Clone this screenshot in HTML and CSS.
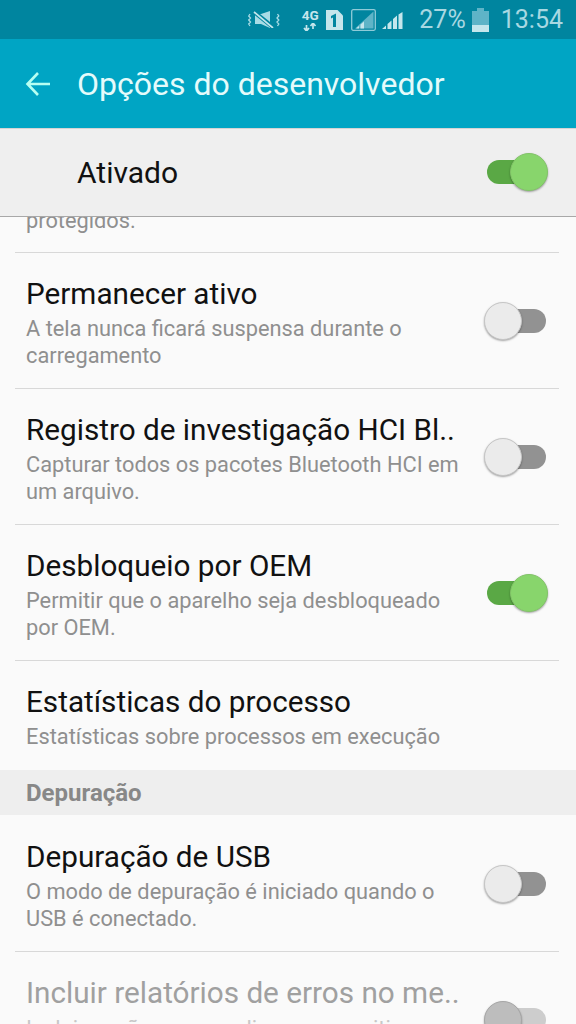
FILE: index.html
```html
<!DOCTYPE html>
<html lang="pt">
<head>
<meta charset="utf-8">
<title>Opções do desenvolvedor</title>
<link rel="stylesheet" href="styles.css">
</head>
<body>
<div class="screen">
  <div class="status">
    <svg class="ic-mute" viewBox="0 0 32 17" width="32" height="17">
      <path d="M7 3h6l9-3v17l-9-4H7z" fill="#a8dbe5"/>
      <path d="M5 0l21 17" stroke="#00859f" stroke-width="4.200"/>
      <path d="M6 1l19 16" stroke="#c5e6ec" stroke-width="1.700"/>
      <path d="M2 3L.7 5 2.500 7 .7 9l1.800 2L.7 13l1.300 2M29.500 3l1.300 2L29 7l1.800 2L29 11l1.800 2-1.300 2" fill="none" stroke="#a8dbe5" stroke-width="1.300"/>
    </svg>
    <div class="net"><span class="net-label">4G</span>
      <svg viewBox="0 0 14 8" width="14" height="8"><path d="M3.500 8V2M1 5l2.500 3L6 5M10 0v6M7.500 3L10 0l2.500 3" fill="none" stroke="#c5e6ec" stroke-width="1.700"/></svg>
    </div>
    <svg class="ic-sim" viewBox="0 0 17 20" width="17" height="20">
      <path d="M0 0h11.500L17 5.500V20H0z" fill="#c5e6ec"/>
      <path d="M5 6l5-2.500V17H7V7.500L5 8.500z" fill="#00859f"/>
    </svg>
    <svg class="ic-box" viewBox="0 0 25 22" width="25" height="22">
      <rect x=".7" y=".7" width="23.600" height="20.600" rx="1.500" fill="none" stroke="#8fcbd8" stroke-width="1.300"/>
      <path d="M22.500 2.500V19.500H4z" fill="#5fb4c7"/>
      <path d="M5 19.500l3-2.500v2.500zM9.500 19.500v-4l3.500-3v7z" fill="#c5e6ec"/>
    </svg>
    <svg class="ic-bars" viewBox="0 0 22 17" width="22" height="17">
      <path d="M0 17l4-3.500V17zM5.500 17v-5l4-3.500V17zM11 17V7l4-3.500V17zM16.500 17V2.500L20.500 0v17z" fill="#c5e6ec"/>
    </svg>
    <span class="pct">27%</span>
    <svg class="ic-batt" viewBox="0 0 17 24" width="17" height="24">
      <path d="M5 3V0h7v3h5v21H0V3z" fill="#5fb4c7"/>
      <rect y="17" width="17" height="7" fill="#c5e6ec"/>
    </svg>
    <span class="clock">13:54</span>
  </div>

  <header class="appbar">
    <svg class="back" viewBox="0 0 26 26" width="26" height="26">
      <path d="M25 13H3M13 2L2.500 13 13 24" fill="none" stroke="#b6fff2" stroke-width="2.600"/>
    </svg>
    <h1 class="title">Opções do desenvolvedor</h1>
  </header>

  <div class="master">
    <span class="master-label">Ativado</span>
    <span class="switch on"><span class="knob"></span></span>
  </div>

  <main class="list">
    <div class="stub"><span class="sub">protegidos.</span></div>

    <div class="row">
      <div class="text">
        <div class="name">Permanecer ativo</div>
        <div class="sub">A tela nunca ficará suspensa durante o carregamento</div>
      </div>
      <span class="switch"><span class="knob"></span></span>
    </div>

    <div class="row">
      <div class="text">
        <div class="name">Registro de investigação HCI Bl..</div>
        <div class="sub">Capturar todos os pacotes Bluetooth HCI em um arquivo.</div>
      </div>
      <span class="switch"><span class="knob"></span></span>
    </div>

    <div class="row">
      <div class="text">
        <div class="name">Desbloqueio por OEM</div>
        <div class="sub">Permitir que o aparelho seja desbloqueado por OEM.</div>
      </div>
      <span class="switch on"><span class="knob"></span></span>
    </div>

    <div class="row last">
      <div class="text">
        <div class="name">Estatísticas do processo</div>
        <div class="sub">Estatísticas sobre processos em execução</div>
      </div>
    </div>

    <div class="section">Depuração</div>

    <div class="row after-section">
      <div class="text">
        <div class="name">Depuração de USB</div>
        <div class="sub">O modo de depuração é iniciado quando o USB é conectado.</div>
      </div>
      <span class="switch"><span class="knob"></span></span>
    </div>

    <div class="row disabled">
      <div class="text">
        <div class="name">Incluir relatórios de erros no me..</div>
        <div class="sub">Incluir opção no menu ligar para emitir</div>
      </div>
      <span class="switch"><span class="knob"></span></span>
    </div>
  </main>
</div>
</body>
</html>
```
FILE: styles.css
```css
* { box-sizing: border-box; }
html, body { margin: 0; padding: 0; }
body { width: 576px; height: 1024px; overflow: hidden; font-family: Roboto, "Noto Sans", sans-serif; background: #fafafa; }
.screen { width: 576px; height: 1024px; overflow: hidden; display: flex; flex-direction: column; }

.status { height: 39px; flex: none; background: #00859f; display: flex; align-items: center; justify-content: flex-end; padding-right: 13px; color: #a8d8e2; }
.ic-mute { margin-right: 21px; }
.net { display: flex; flex-direction: column; align-items: center; gap: 2px; margin-right: 7px; width: 18px; }
.net-label { font-size: 13.500px; line-height: 12px; font-weight: 700; color: #c5e6ec; }
.ic-sim { margin-right: 8px; }
.ic-box { margin-right: 6px; }
.ic-bars { margin-right: 15px; transform: translateY(1px); }
.pct { font-size: 25px; margin-right: 6px; }
.ic-batt { margin-right: 12px; }
.clock { font-size: 25px; }

.appbar { height: 89px; flex: none; background: #00a5c4; display: flex; align-items: center; padding: 0 0 0 25px; }
.back { margin-right: 26px; }
.title { margin: 0; font-size: 32px; font-weight: 400; color: #e4fbfb; white-space: nowrap; }

.master { height: 89px; flex: none; background: #efefef; border-top: 1px solid #d4d4d4; border-bottom: 1px solid #a8a8a8; display: flex; align-items: center; justify-content: space-between; padding: 0 30px 0 77px; position: relative; z-index: 1; }
.master-label { font-size: 30px; color: #111; }

.list { flex: 1; overflow: hidden; }
.stub { height: 36px; margin: 0 17px 0 15px; padding: 0 0 21px 11px; border-bottom: 1px solid #d8d8d8; display: flex; align-items: flex-end; }
.stub .sub { line-height: 20px; }

.row { height: 136px; margin: 0 17px 0 15px; padding: 22px 0 0 11px; border-bottom: 1px solid #d8d8d8; display: flex; align-items: flex-start; justify-content: space-between; }
.row.last { height: 109px; border-bottom: 0; }
.row.after-section { height: 137px; padding-top: 23px; }
.text { width: 445px; }
.name { font-size: 29.700px; line-height: 38px; color: #111; white-space: nowrap; }
.sub { font-size: 21.800px; line-height: 27px; color: #8f8f8f; margin-top: 2px; }

.section { height: 45px; background: #eeeeee; color: #888; font-size: 24px; font-weight: 700; padding-left: 26px; display: flex; align-items: center; }

.switch { width: 59px; height: 24px; flex: none; position: relative; border-radius: 12px; background: #929292; margin: 34px 13px 0 0; }
.knob { position: absolute; left: -3px; top: -7px; width: 38px; height: 38px; border-radius: 50%; background: #ebebeb; border: 1.500px solid #c6c6c6; box-shadow: 0 1px 2px rgba(0,0,0,.35); }
.switch.on { background: #5aa845; }
.switch.on .knob { left: 23px; background: #88d56c; border-color: #82c468; }
.master .switch { margin: 0; transform: translateY(-1px); }

.disabled .name { color: #a0a0a0; }
.disabled .sub { color: #c8c8c8; margin-top: 3px; }
.disabled .switch { background: #cdcdcd; }
.disabled .knob { background: #bdbdbd; border-color: #a6a6a6; }
```
